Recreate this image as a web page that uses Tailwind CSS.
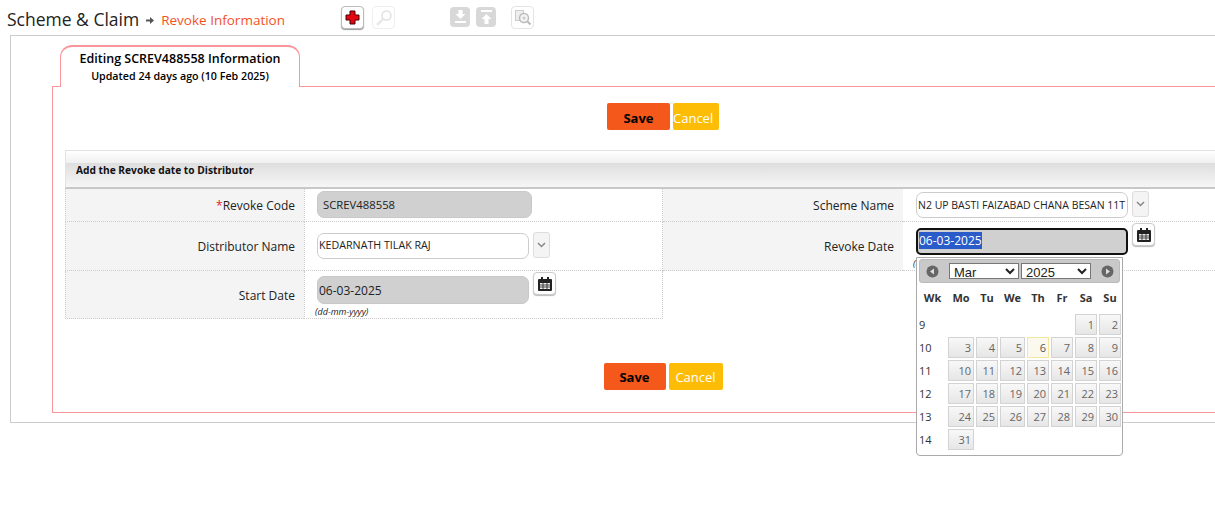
<!DOCTYPE html>
<html lang="en">
<head>
  <meta charset="UTF-8">
  <meta name="viewport" content="width=device-width, initial-scale=1.0">
  <title>Revoke Information</title>
  <script src="https://cdn.jsdelivr.net/npm/@tailwindcss/browser@4"></script>
</head>
<body class="bg-white overflow-hidden h-[507px] text-[#222] font-['Open_Sans','Liberation_Sans',sans-serif]">
  <!-- page title and toolbar -->
  <div class="h-[35px] flex items-start">
    <div class="w-[341px] shrink-0 flex items-start">
      <span class="ml-[7px] mt-[6px] text-[17.500px] leading-[26px] text-[#222]">Scheme &amp; Claim</span>
      <svg class="ml-[7px] mt-[17px]" width="8" height="7" viewBox="0 0 8 7"><path d="M0 2.500h4V0l4 3.500L4 7V4.500H0z" fill="#555"/></svg>
      <span class="ml-[7px] mt-[9px] text-[13.500px] leading-[22px] text-[#f4511e]">Revoke Information</span>
    </div>

    <button class="mt-[6px] w-[23px] h-[23px] rounded-[4px] border border-[#bbb] bg-white shadow-[0_1px_1px_#999] flex items-center justify-center">
      <svg width="15" height="15" viewBox="0 0 15 15"><path d="M5 1h5v4h4v5h-4v4H5v-4H1V5h4z" fill="#e40613" stroke="#400" stroke-width="1"/></svg>
    </button>
    <button class="ml-[8px] mt-[6px] w-[23px] h-[23px] rounded-[4px] border border-[#eee] bg-white flex items-center justify-center">
      <svg width="18" height="18" viewBox="0 0 18 18" fill="none"><circle cx="11.500" cy="6.500" r="4.500" stroke="#e2e2e2" stroke-width="1.500"/><path d="M8 10l-6 6" stroke="#e8e8e8" stroke-width="2.500"/></svg>
    </button>
    <div class="ml-[55px] mt-[7px] w-[20px] h-[20px] rounded-[4px] bg-[#d8d8d8] flex items-center justify-center">
      <svg width="13" height="14" viewBox="0 0 13 14" fill="#fff"><path d="M4.500 0h4v4h3l-5 5-5-5h3zM1 11h11v2H1z"/></svg>
    </div>
    <div class="ml-[6px] mt-[7px] w-[20px] h-[20px] rounded-[4px] bg-[#d8d8d8] flex items-center justify-center">
      <svg width="13" height="14" viewBox="0 0 13 14" fill="#fff"><path d="M1 0h11v2H1zM6.500 4l5 5h-3v5h-4V9h-3z"/></svg>
    </div>
    <button class="ml-[15px] mt-[6px] w-[23px] h-[23px] rounded-[4px] border border-[#e4e4e4] bg-white flex items-center justify-center">
      <svg width="18" height="18" viewBox="0 0 18 18" fill="none"><rect x="1.500" y="1.500" width="8" height="10" fill="#eee" stroke="#ccc"/><circle cx="10" cy="9" r="4.500" fill="#f4f4f4" stroke="#bbb" stroke-width="1.500"/><circle cx="10" cy="9" r="1.500" fill="#ccc"/><path d="M13.500 12.500l3 3" stroke="#bbb" stroke-width="2"/></svg>
    </button>
  </div>

  <!-- outer frame -->
  <div class="ml-[10px] h-[388px] border border-r-0 border-[#ccc] pt-[9px] pl-[41px]">
    <!-- tab -->
    <div class="relative z-10 ml-[8px] -mb-px w-[240px] h-[42px] bg-white border border-t-2 border-b-0 border-[#f8969c] rounded-t-[12px] text-center text-black">
      <div class="mt-[3px] text-[12.500px] leading-[18px] font-semibold">Editing SCREV488558 Information</div>
      <div class="text-[10.700px] leading-[17px] font-semibold">Updated 24 days ago (10 Feb 2025)</div>
    </div>

    <!-- form panel -->
    <div class="w-[1222px] h-[327px] border border-[#f8969c] pt-[16px]">
      <div class="flex justify-center gap-[3px]">
        <button class="w-[63px] h-[27px] rounded-[2px] bg-[#f4581a] pt-[4px] text-[13px] font-bold text-black">Save</button>
        <button class="w-[46px] h-[27px] rounded-[2px] bg-[#fdbc05] pt-[4px] pr-[6px] text-[13px] text-white whitespace-nowrap">Cancel</button>
      </div>

      <div class="ml-[12px] mt-[20px] h-[39px] border-t border-l border-[#e2e2e2] border-b-2 border-b-[#c8c8c8] bg-[linear-gradient(to_bottom,#fff_0%,#f0f0f0_33%,#dedede_33%,#f6f6f6_100%)] pl-[10px] pt-[10px] text-[10.200px] leading-[18px] font-bold text-[#111]">Add the Revoke date to Distributor</div>

      <!-- fields -->
      <div class="relative ml-[12px] grid grid-cols-[239px_359px_240px_1fr] grid-rows-[33px_49px_48px] text-[12px] text-[#222]">
        <div class="flex items-center justify-end pt-[2px] pr-[9px] border-l border-b border-dotted border-[#ccc] bg-[#f4f4f4]"><span class="text-[#e2231a]">*</span>Revoke Code</div>
        <div class="border-x border-b border-dotted border-[#ccc] pl-[12px] pt-[2px]">
          <div class="w-[215px] h-[27px] rounded-[7px] bg-[#d0d0d0] border border-[#c8c8c8] pl-[5px] text-[11.300px] leading-[26px]">SCREV488558</div>
        </div>
        <div class="flex items-center justify-end pt-[2px] pr-[9px] border-b border-dotted border-[#ccc] bg-[#f4f4f4]">Scheme Name</div>
        <div class="flex items-start pl-[13px] pt-[3px] border-b border-dotted border-[#ccc]">
          <div class="w-[212px] h-[26px] rounded-[7px] bg-white border border-[#ccc] pl-[1px] text-[10.500px] leading-[24px] whitespace-nowrap overflow-hidden">N2 UP BASTI FAIZABAD CHANA BESAN 11T</div>
          <div class="ml-[4px] -mt-px w-[17px] h-[26px] rounded-[3px] border border-[#ddd] bg-[#f4f4f4] flex items-center justify-center">
            <svg width="9" height="6" viewBox="0 0 9 6" fill="none"><path d="M1 1l3.500 3.500L8 1" stroke="#888" stroke-width="1.500"/></svg>
          </div>
        </div>

        <div class="flex items-center justify-end pt-[2px] pr-[9px] border-l border-b border-dotted border-[#ccc] bg-[#f4f4f4]">Distributor Name</div>
        <div class="flex items-start border-x border-b border-dotted border-[#ccc] pl-[12px] pt-[11px]">
          <div class="w-[212px] h-[26px] rounded-[7px] bg-white border border-[#ccc] pl-[1px] text-[10.700px] leading-[22px]">KEDARNATH TILAK RAJ</div>
          <div class="ml-[4px] -mt-px w-[17px] h-[26px] rounded-[3px] border border-[#ddd] bg-[#f4f4f4] flex items-center justify-center">
            <svg width="9" height="6" viewBox="0 0 9 6" fill="none"><path d="M1 1l3.500 3.500L8 1" stroke="#888" stroke-width="1.500"/></svg>
          </div>
        </div>
        <div class="flex items-center justify-end pt-[2px] pr-[9px] border-b border-dotted border-[#ccc] bg-[#f4f4f4]">Revoke Date</div>
        <div class="relative flex items-start pl-[13px] pt-[6px] border-b border-dotted border-[#ccc]">
          <div class="w-[212px] h-[27px] rounded-[5px] bg-[#d0d0d0] border-2 border-[#111] pl-[1px] pt-[3px] text-[12px] leading-[16px]"><span class="bg-[#2a5cc9] text-white">06-03-2025</span></div>
          <div class="ml-[4px] -mt-[5px] w-[23px] h-[23px] rounded-[4px] border border-[#ccc] bg-white shadow-[0_1px_1px_#bbb] flex items-center justify-center">
            <svg width="14" height="14" viewBox="0 0 14 14"><path d="M3 0h2v2h4V0h2v2h2a1 1 0 0 1 1 1v10a1 1 0 0 1-1 1H1a1 1 0 0 1-1-1V3a1 1 0 0 1 1-1h2z" fill="#222"/><path d="M2 6h10v6H2z" fill="#eee"/><path d="M2 8h10M2 10h10M5 6v6M9 6v6" stroke="#222" stroke-width=".8"/></svg>
          </div>
          <span class="absolute left-[10px] top-[35px] text-[9px] italic">(dd-mm-yyyy)</span>

          <!-- date picker popup -->
          <div class="absolute z-20 left-[13px] top-[35px] w-[207px] h-[199px] bg-white border border-[#aaa] rounded-b-[4px] px-[2px] pt-[1px] text-[#333]">
            <div class="h-[24px] rounded-[3px] border border-[#bbb] bg-[#c9c9c9] flex items-center pl-[6px]">
              <svg width="13" height="13" viewBox="0 0 13 13"><circle cx="6.500" cy="6.500" r="6" fill="#666"/><path d="M8 3.500v6L4 6.500z" fill="#ddd"/></svg>
              <select class="ml-[10px] -mt-px w-[70px] h-[16px] bg-white border border-[#777] pl-0 text-[13px] leading-[14px] text-[#222] font-['Liberation_Sans',sans-serif]"><option>Mar</option></select>
              <select class="ml-[2px] -mt-px w-[70px] h-[16px] bg-white border border-[#777] pl-0 text-[13px] leading-[14px] text-[#222] font-['Liberation_Sans',sans-serif]"><option>2025</option></select>
              <svg class="ml-[10px]" width="13" height="13" viewBox="0 0 13 13"><circle cx="6.500" cy="6.500" r="6" fill="#666"/><path d="M5 3.500v6l4-3z" fill="#ddd"/></svg>
            </div>

            <div class="grid grid-cols-[27px_26px_22px_25px_22px_22px_22px_22px] grid-rows-[21px_2px_21px_21px_21px_21px_21px_21px] gap-[2px] mt-[4px] text-[11px] text-right">
              <div class="font-bold text-center leading-[21px]">Wk</div>
              <div class="font-bold text-center leading-[21px]">Mo</div>
              <div class="font-bold text-center leading-[21px]">Tu</div>
              <div class="font-bold text-center leading-[21px]">We</div>
              <div class="font-bold text-center leading-[21px]">Th</div>
              <div class="font-bold text-center leading-[21px]">Fr</div>
              <div class="font-bold text-center leading-[21px]">Sa</div>
              <div class="font-bold text-center leading-[21px]">Su</div>

              <div class="col-span-8"></div>

              <div class="text-left leading-[21px]">9</div>
              <div class="col-span-5"></div>
              <div class="border border-[#d3d3d3] bg-gradient-to-b from-[#f8f8f8] to-[#e6e6e6] text-[#666] pr-[2px] leading-[20px]">1</div>
              <div class="border border-[#d3d3d3] bg-gradient-to-b from-[#f8f8f8] to-[#e6e6e6] text-[#666] pr-[2px] leading-[20px]">2</div>

              <div class="text-left leading-[21px]">10</div>
              <div class="border border-[#d3d3d3] bg-gradient-to-b from-[#f8f8f8] to-[#e6e6e6] text-[#666] pr-[2px] leading-[20px]">3</div>
              <div class="border border-[#d3d3d3] bg-gradient-to-b from-[#f8f8f8] to-[#e6e6e6] text-[#666] pr-[2px] leading-[20px]">4</div>
              <div class="border border-[#d3d3d3] bg-gradient-to-b from-[#f8f8f8] to-[#e6e6e6] text-[#666] pr-[2px] leading-[20px]">5</div>
              <div class="border border-[#f5e79e] bg-[#fbf9ee] text-[#555] pr-[2px] leading-[20px]">6</div>
              <div class="border border-[#d3d3d3] bg-gradient-to-b from-[#f8f8f8] to-[#e6e6e6] text-[#666] pr-[2px] leading-[20px]">7</div>
              <div class="border border-[#d3d3d3] bg-gradient-to-b from-[#f8f8f8] to-[#e6e6e6] text-[#666] pr-[2px] leading-[20px]">8</div>
              <div class="border border-[#d3d3d3] bg-gradient-to-b from-[#f8f8f8] to-[#e6e6e6] text-[#666] pr-[2px] leading-[20px]">9</div>

              <div class="text-left leading-[21px]">11</div>
              <div class="border border-[#d3d3d3] bg-gradient-to-b from-[#f8f8f8] to-[#e6e6e6] text-[#666] pr-[2px] leading-[20px]">10</div>
              <div class="border border-[#d3d3d3] bg-gradient-to-b from-[#f8f8f8] to-[#e6e6e6] text-[#666] pr-[2px] leading-[20px]">11</div>
              <div class="border border-[#d3d3d3] bg-gradient-to-b from-[#f8f8f8] to-[#e6e6e6] text-[#666] pr-[2px] leading-[20px]">12</div>
              <div class="border border-[#d3d3d3] bg-gradient-to-b from-[#f8f8f8] to-[#e6e6e6] text-[#666] pr-[2px] leading-[20px]">13</div>
              <div class="border border-[#d3d3d3] bg-gradient-to-b from-[#f8f8f8] to-[#e6e6e6] text-[#666] pr-[2px] leading-[20px]">14</div>
              <div class="border border-[#d3d3d3] bg-gradient-to-b from-[#f8f8f8] to-[#e6e6e6] text-[#666] pr-[2px] leading-[20px]">15</div>
              <div class="border border-[#d3d3d3] bg-gradient-to-b from-[#f8f8f8] to-[#e6e6e6] text-[#666] pr-[2px] leading-[20px]">16</div>

              <div class="text-left leading-[21px]">12</div>
              <div class="border border-[#d3d3d3] bg-gradient-to-b from-[#f8f8f8] to-[#e6e6e6] text-[#666] pr-[2px] leading-[20px]">17</div>
              <div class="border border-[#d3d3d3] bg-gradient-to-b from-[#f8f8f8] to-[#e6e6e6] text-[#666] pr-[2px] leading-[20px]">18</div>
              <div class="border border-[#d3d3d3] bg-gradient-to-b from-[#f8f8f8] to-[#e6e6e6] text-[#666] pr-[2px] leading-[20px]">19</div>
              <div class="border border-[#d3d3d3] bg-gradient-to-b from-[#f8f8f8] to-[#e6e6e6] text-[#666] pr-[2px] leading-[20px]">20</div>
              <div class="border border-[#d3d3d3] bg-gradient-to-b from-[#f8f8f8] to-[#e6e6e6] text-[#666] pr-[2px] leading-[20px]">21</div>
              <div class="border border-[#d3d3d3] bg-gradient-to-b from-[#f8f8f8] to-[#e6e6e6] text-[#666] pr-[2px] leading-[20px]">22</div>
              <div class="border border-[#d3d3d3] bg-gradient-to-b from-[#f8f8f8] to-[#e6e6e6] text-[#666] pr-[2px] leading-[20px]">23</div>

              <div class="text-left leading-[21px]">13</div>
              <div class="border border-[#d3d3d3] bg-gradient-to-b from-[#f8f8f8] to-[#e6e6e6] text-[#666] pr-[2px] leading-[20px]">24</div>
              <div class="border border-[#d3d3d3] bg-gradient-to-b from-[#f8f8f8] to-[#e6e6e6] text-[#666] pr-[2px] leading-[20px]">25</div>
              <div class="border border-[#d3d3d3] bg-gradient-to-b from-[#f8f8f8] to-[#e6e6e6] text-[#666] pr-[2px] leading-[20px]">26</div>
              <div class="border border-[#d3d3d3] bg-gradient-to-b from-[#f8f8f8] to-[#e6e6e6] text-[#666] pr-[2px] leading-[20px]">27</div>
              <div class="border border-[#d3d3d3] bg-gradient-to-b from-[#f8f8f8] to-[#e6e6e6] text-[#666] pr-[2px] leading-[20px]">28</div>
              <div class="border border-[#d3d3d3] bg-gradient-to-b from-[#f8f8f8] to-[#e6e6e6] text-[#666] pr-[2px] leading-[20px]">29</div>
              <div class="border border-[#d3d3d3] bg-gradient-to-b from-[#f8f8f8] to-[#e6e6e6] text-[#666] pr-[2px] leading-[20px]">30</div>

              <div class="text-left leading-[21px]">14</div>
              <div class="border border-[#d3d3d3] bg-gradient-to-b from-[#f8f8f8] to-[#e6e6e6] text-[#666] pr-[2px] leading-[20px]">31</div>
            </div>
          </div>
        </div>

        <div class="flex items-center justify-end pt-[2px] pr-[9px] border-l border-b border-dotted border-[#ccc] bg-[#f4f4f4]">Start Date</div>
        <div class="relative flex items-start border-x border-b border-dotted border-[#ccc] pl-[12px] pt-[5px]">
          <div class="w-[212px] h-[28px] rounded-[7px] bg-[#d0d0d0] border border-[#c8c8c8] pl-[1px] text-[12px] leading-[27px]">06-03-2025</div>
          <div class="ml-[4px] -mt-[4px] w-[23px] h-[23px] rounded-[4px] border border-[#ccc] bg-white shadow-[0_1px_1px_#bbb] flex items-center justify-center">
            <svg width="14" height="14" viewBox="0 0 14 14"><path d="M3 0h2v2h4V0h2v2h2a1 1 0 0 1 1 1v10a1 1 0 0 1-1 1H1a1 1 0 0 1-1-1V3a1 1 0 0 1 1-1h2z" fill="#222"/><path d="M2 6h10v6H2z" fill="#eee"/><path d="M2 8h10M2 10h10M5 6v6M9 6v6" stroke="#222" stroke-width=".8"/></svg>
          </div>
          <span class="absolute left-[10px] top-[35px] text-[9px] leading-[12px] italic">(dd-mm-yyyy)</span>
        </div>
      </div>

      <div class="mt-[44px] flex justify-center gap-[3px]">
        <button class="w-[62px] h-[27px] rounded-[2px] bg-[#f4581a] pt-[2px] text-[13px] font-bold text-black">Save</button>
        <button class="w-[54px] h-[27px] rounded-[2px] bg-[#fdbc05] pt-[2px] text-[13px] text-white">Cancel</button>
      </div>
    </div>
  </div>
</body>
</html>
